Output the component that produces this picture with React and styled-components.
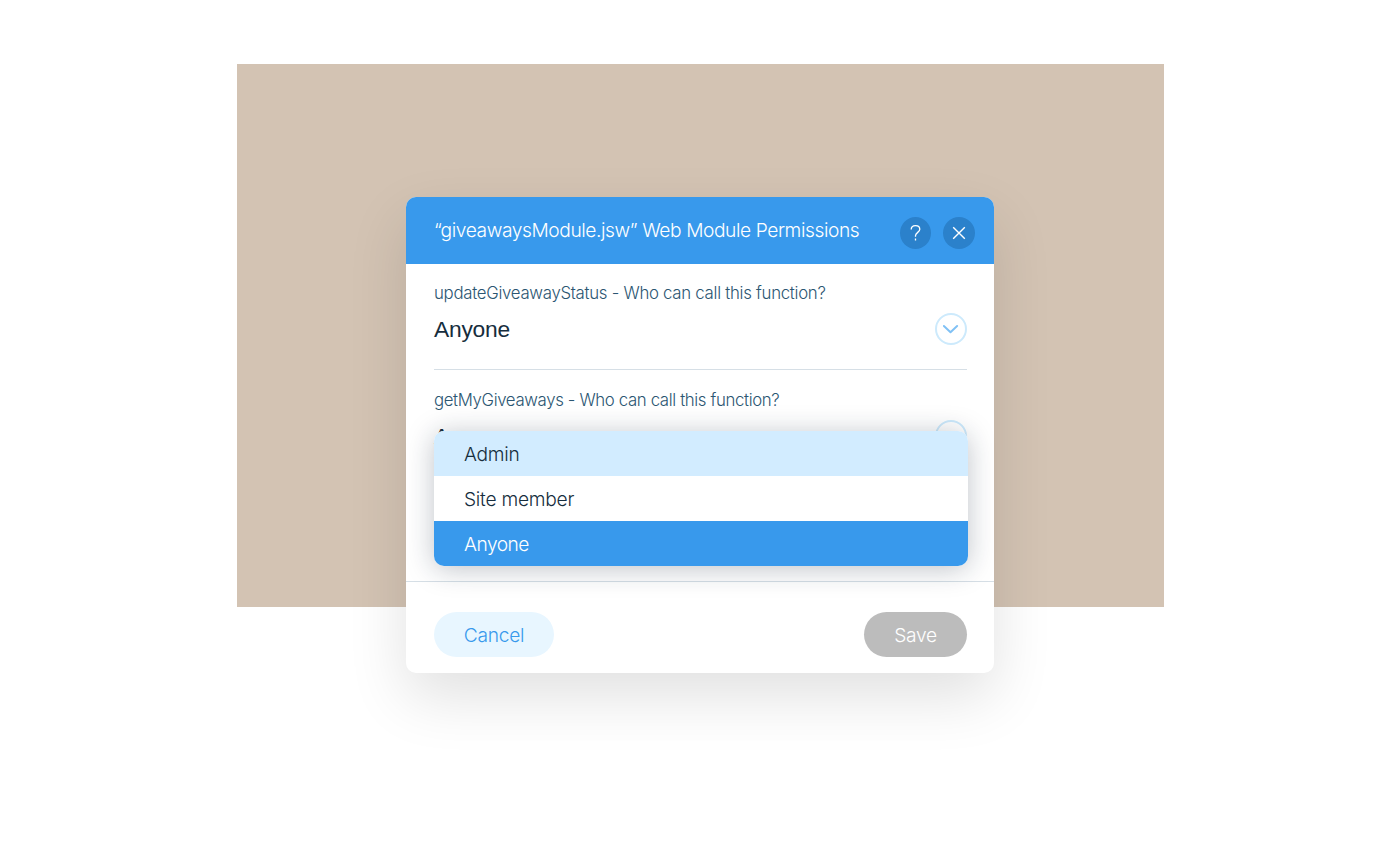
import React from "react";
import styled, { createGlobalStyle } from "styled-components";

const GlobalStyle = createGlobalStyle`
  *, *::before, *::after { box-sizing: border-box; }
  body {
    margin: 0;
    background: #fff;
    font-family: Inter, "Liberation Sans", sans-serif;
    font-weight: 300;
  }
`;

const Page = styled.main`
  height: 853px;
  padding: 64px 236px 0 237px;
  overflow: hidden;
`;

const Stage = styled.div`
  height: 543px;
  padding: 133px 170px 0 169px;
  background: #d3c3b3;
`;

const Dialog = styled.section`
  display: flex;
  flex-direction: column;
  height: 476px;
  border-radius: 10px;
  background: #fff;
  box-shadow: 0 24px 60px rgba(0, 0, 0, 0.12);
`;

const Header = styled.header`
  display: flex;
  height: 67px;
  flex: none;
  padding: 20px 19px 0 28px;
  border-radius: 10px 10px 0 0;
  background: #3899ec;
  color: #fff;
`;

const Title = styled.h1`
  flex: 1;
  margin: 0;
  font-size: 19.2px;
  font-weight: 300;
  line-height: 26px;
  letter-spacing: ${(p) => p.$spacing};
  white-space: nowrap;
`;

const HeaderActions = styled.div`
  display: flex;
  gap: 12px;
`;

const RoundButton = styled.button`
  display: grid;
  place-items: center;
  width: ${(p) => p.$width || "32px"};
  height: 32px;
  padding: 0;
  border: 0;
  border-radius: 50%;
  background: #2b81cb;
  color: #fff;
`;

const Body = styled.div`
  flex: 1;
  padding: 16px 27px 0 28px;
`;

const Field = styled.div`
  position: relative;
  height: 107px;
  padding-bottom: 24px;
`;

const DividedField = styled(Field)`
  height: 90px;
  border-bottom: 1px solid #d6dfe6;
`;

const FieldGap = styled.div`
  height: 17px;
`;

const Label = styled.div`
  height: 26px;
  color: #2b5672;
  font-size: 16.8px;
  line-height: 26px;
  letter-spacing: ${(p) => p.$spacing};
  white-space: nowrap;
`;

const SelectRow = styled.div`
  display: flex;
  justify-content: space-between;
  align-items: center;
  height: 32px;
  margin-top: 7px;
  color: #162d3d;
  font: 400 22.8px/32px "Liberation Sans", Arial, sans-serif;
  letter-spacing: -0.25px;
`;

const Toggle = styled.button`
  display: grid;
  place-items: center;
  width: 32px;
  height: 32px;
  padding: 0;
  border: 2px solid #cdeafc;
  border-radius: 50%;
  background: transparent;
  color: #80c1f5;
`;

const Menu = styled.ul`
  position: absolute;
  top: 44px;
  left: 0;
  z-index: 1;
  width: 534px;
  margin: 0;
  padding: 0;
  overflow: hidden;
  list-style: none;
  border-radius: 10px;
  background: #fff;
  box-shadow: 0 3px 28px rgba(20, 35, 55, 0.27);
`;

const tones = {
  hover: "#d2ecff",
  plain: "#ffffff",
  selected: "#3899ec",
};

const Option = styled.li`
  height: 45px;
  padding: 0 30px;
  background: ${(p) => tones[p.$tone]};
  color: ${(p) => (p.$tone === "selected" ? "#fff" : "#162d3d")};
  font-size: 19.2px;
  line-height: 46px;
  letter-spacing: ${(p) => p.$spacing};
`;

const Footer = styled.footer`
  display: flex;
  justify-content: space-between;
  height: 92px;
  flex: none;
  padding: 30px 27px 0 28px;
  border-top: 1px solid #d6dfe6;
`;

const Pill = styled.button`
  width: ${(p) => p.$width};
  height: 45px;
  padding: 2px 0 0;
  border: 0;
  border-radius: 23px;
  background: ${(p) => (p.$disabled ? "#bcbcbc" : "#e8f6ff")};
  color: ${(p) => (p.$disabled ? "#fff" : "#3899ec")};
  font: inherit;
  font-size: 19.2px;
  line-height: 43px;
  letter-spacing: ${(p) => p.$spacing};
`;

const Chevron = () => (
  <svg width="16" height="10" viewBox="0 0 16 10" fill="none" stroke="currentColor" strokeWidth="2" strokeLinecap="round" strokeLinejoin="round">
    <path d="M0.900 2 7.500 8.200l6.600-6.200" />
  </svg>
);

const QuestionIcon = () => (
  <svg width="13" height="18" viewBox="0 0 13 18" fill="none" stroke="currentColor" strokeWidth="1.3">
    <path d="M2.200 5.600C2.200 2.900 3.700 1.600 6.500 1.600s4.300 1.500 4.300 3.700C10.800 8.300 6.500 8.500 6.500 11.800v1M6.500 14.600v1.800" />
  </svg>
);

const CloseIcon = () => (
  <svg width="14" height="14" viewBox="0 0 14 14" fill="none" stroke="currentColor" strokeWidth="1.4">
    <path d="m1.200 1.200 11.600 11.600M12.800 1.200 1.200 12.800" />
  </svg>
);

export default function App() {
  return (
    <>
      <GlobalStyle />
      <Page>
        <Stage>
          <Dialog>
            <Header>
              <Title $spacing="-0.42px">“giveawaysModule.jsw” Web Module Permissions</Title>
              <HeaderActions>
                <RoundButton $width="31px" aria-label="Help"><QuestionIcon /></RoundButton>
                <RoundButton aria-label="Close"><CloseIcon /></RoundButton>
              </HeaderActions>
            </Header>
            <Body>
              <DividedField>
                <Label $spacing="-0.28px">updateGiveawayStatus - Who can call this function?</Label>
                <SelectRow>
                  <span>Anyone</span>
                  <Toggle aria-label="Open"><Chevron /></Toggle>
                </SelectRow>
              </DividedField>
              <FieldGap />
              <Field>
                <Label $spacing="-0.36px">getMyGiveaways - Who can call this function?</Label>
                <SelectRow>
                  <span>Anyone</span>
                  <Toggle aria-label="Open"><Chevron /></Toggle>
                </SelectRow>
                <Menu>
                  <Option $tone="hover" $spacing="-0.3px">Admin</Option>
                  <Option $tone="plain" $spacing="-0.25px">Site member</Option>
                  <Option $tone="selected" $spacing="-0.5px">Anyone</Option>
                </Menu>
              </Field>
            </Body>
            <Footer>
              <Pill $width="120px" $spacing="-0.3px">Cancel</Pill>
              <Pill $width="103px" $disabled $spacing="-0.3px">Save</Pill>
            </Footer>
          </Dialog>
        </Stage>
      </Page>
    </>
  );
}
